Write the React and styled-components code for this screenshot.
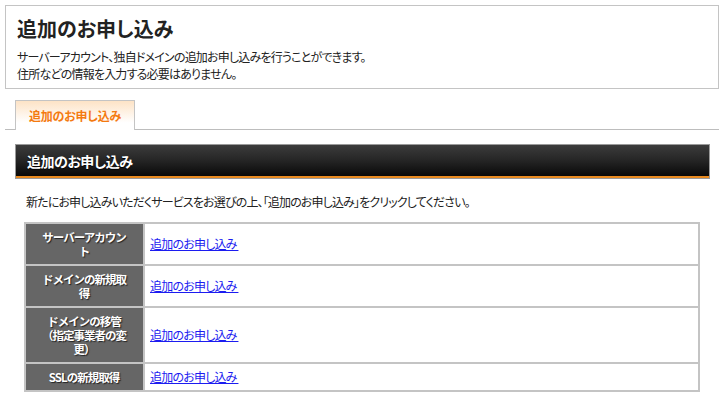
import React from "react";
import styled, { createGlobalStyle } from "styled-components";

const Global = createGlobalStyle`
  html, body { margin: 0; padding: 0; background: #fff; }
  body {
    font-family: "Noto Sans CJK JP", "Noto Sans", sans-serif;
    font-feature-settings: "palt";
    color: #222;
  }
`;

const Page = styled.div`
  width: 714px;
  padding: 5px 0 0 5px;
`;

const Intro = styled.section`
  border: 1px solid #c4c4c4;
  height: 82px;
  padding: 0 11px;
  box-sizing: content-box;
`;

const Title = styled.h1`
  margin: 0;
  padding-top: 11px;
  font-size: 20px;
  line-height: 24px;
  font-weight: bold;
  color: #222;
`;

const IntroText = styled.p`
  margin: 7px 0 0;
  font-size: 12px;
  line-height: 17px;
  letter-spacing: -0.8px;
`;

const TabBar = styled.div`
  display: flex;
  margin-top: 11px;
  padding-left: 10px;
  border-bottom: 1px solid #bdbdbd;
  height: 29px;
`;

const Tab = styled.div`
  width: 118px;
  height: 29px;
  margin-bottom: -1px;
  border: 1px solid #c4c4c4;
  border-bottom: none;
  background: linear-gradient(#fde3c6, #fff 75%);
  color: #f47a10;
  font-size: 12px;
  font-weight: bold;
  letter-spacing: -0.2px;
  display: flex;
  align-items: center;
  justify-content: center;
`;

const Content = styled.div`
  padding: 14px 9px 0 10px;
`;

const SectionBar = styled.h2`
  margin: 0;
  height: 33px;
  border: 1px solid #9a9a9a;
  box-shadow: inset 0 -2px 0 #e88a20;
  background: linear-gradient(#3c3c3c, #262626 45%, #050505);
  color: #fff;
  font-size: 14px;
  font-weight: bold;
  line-height: 32px;
  padding: 0 11px;
  letter-spacing: -0.5px;
  text-shadow: 0 1px 1px #000;
`;

const Lead = styled.p`
  margin: 14px 0 0 11px;
  font-size: 12px;
  line-height: 17px;
  letter-spacing: -0.85px;
`;

const Table = styled.table`
  margin: 12px 0 0 9px;
  width: 676px;
  border: 1px solid #c4c4c4;
  border-spacing: 0;
  border-collapse: separate;
`;

const Th = styled.th`
  width: 90px;
  padding: 6px 14px 6px 13px;
  background: #666;
  color: #fff;
  font-size: 11.5px;
  line-height: 14px;
  font-weight: bold;
  font-feature-settings: normal;
  letter-spacing: -1px;
  text-align: center;
  white-space: pre-line;
  border: 1px solid #c4c4c4;
  text-shadow: 1px 1px 1px #222;
`;

const Td = styled.td`
  padding: 6px 5px;
  border: 1px solid #c4c4c4;
  font-size: 12px;
  line-height: 14px;
`;

const Link = styled.a`
  color: #1c1cf0;
  text-decoration: underline;
  letter-spacing: -0.8px;
  white-space: pre;
`;

const rows = [
  "サーバーアカウント",
  "ドメインの新規取得",
  "ドメインの移管\n（指定事業者の変更）",
  "SSLの新規取得",
];

export default function App() {
  return (
    <Page>
      <Global />
      <Intro>
        <Title>追加のお申し込み</Title>
        <IntroText>
          サーバーアカウント、独自ドメインの追加お申し込みを行うことができます。
          <br />
          住所などの情報を入力する必要はありません。
        </IntroText>
      </Intro>
      <TabBar>
        <Tab>追加のお申し込み</Tab>
      </TabBar>
      <Content>
        <SectionBar>追加のお申し込み</SectionBar>
        <Lead>
          新たにお申し込みいただくサービスをお選びの上、「追加のお申し込み」をクリックしてください。
        </Lead>
        <Table>
          <tbody>
            {rows.map((r) => (
              <tr key={r}>
                <Th>{r}</Th>
                <Td>
                  <Link href="#">{"追加のお申し込み "}</Link>
                </Td>
              </tr>
            ))}
          </tbody>
        </Table>
      </Content>
    </Page>
  );
}
